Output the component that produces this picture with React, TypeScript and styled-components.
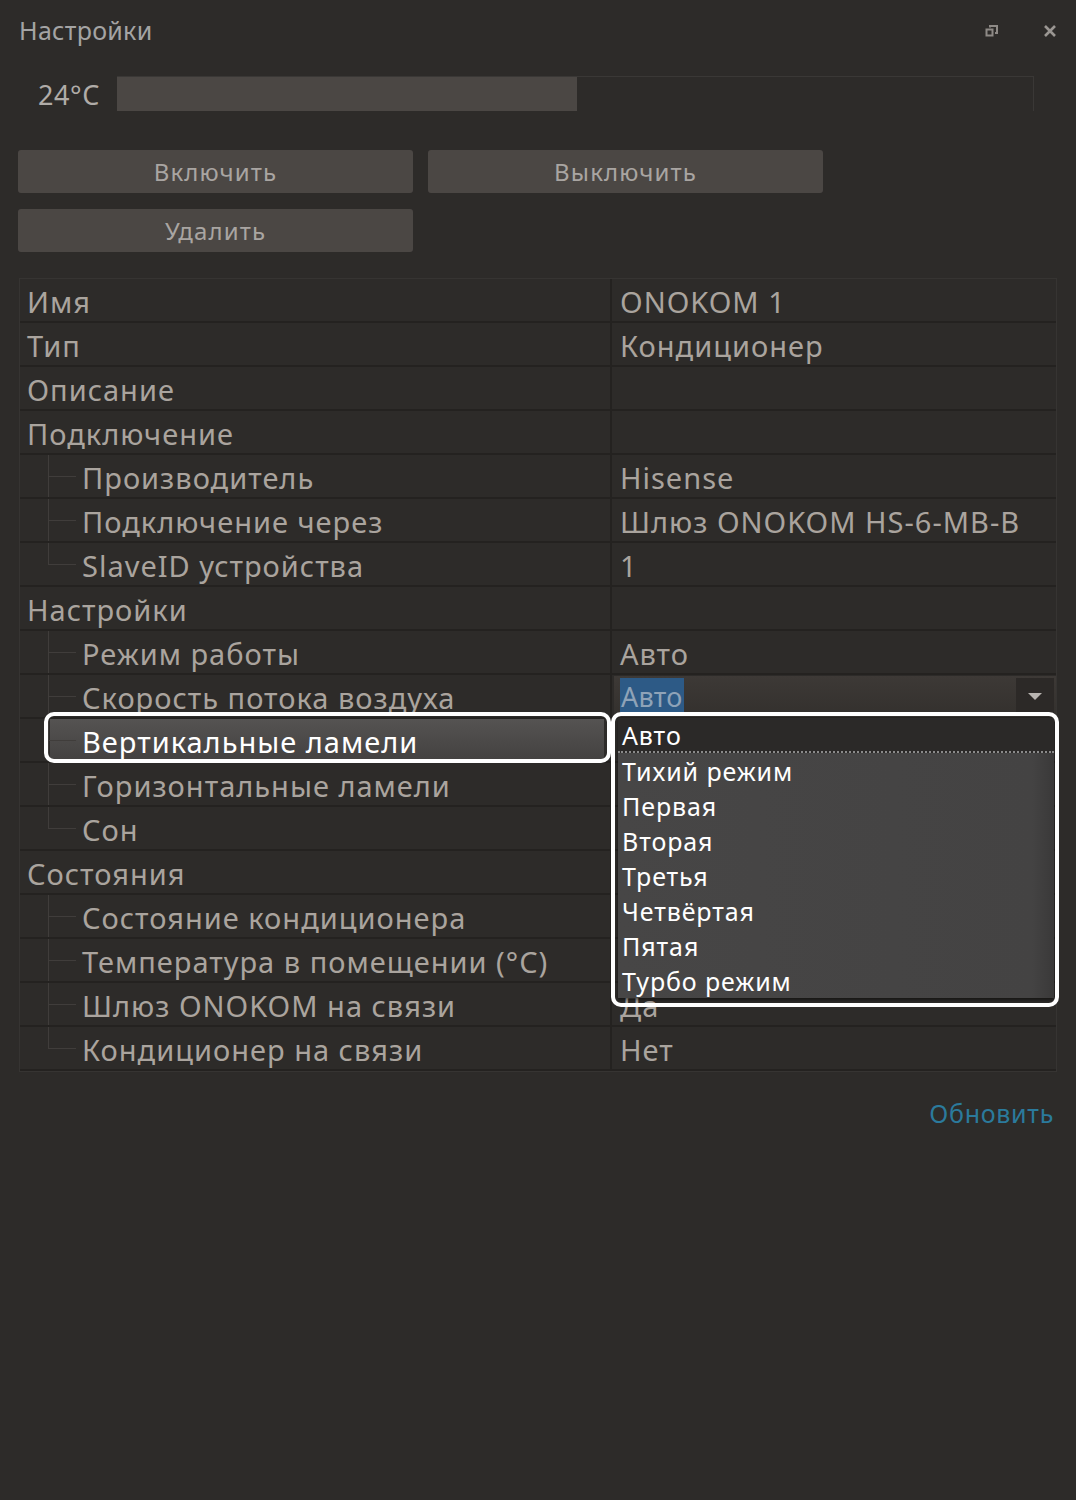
import React from "react";
import styled, { createGlobalStyle, css } from "styled-components";

const FONT = `"Noto Sans", Roboto, sans-serif`;

const Global = createGlobalStyle`
  html, body { margin: 0; padding: 0; background: #2d2b29; }
  body { font-family: ${FONT}; color: #aaa49e; }
  * { box-sizing: border-box; }
`;

const Page = styled.div`
  width: 1076px;
  min-height: 1500px;
  background: #2d2b29;
  padding: 0 19px 0 18px;
  display: flex;
  flex-direction: column;
`;

const Header = styled.div`
  height: 59px;
  display: flex;
  align-items: center;
  justify-content: space-between;
`;

const Title = styled.div`
  font-size: 25px;
  letter-spacing: 0.3px;
  color: #a4a4a4;
  padding-left: 1px;
`;

const WinButtons = styled.div`
  display: flex;
  align-items: center;
  gap: 44px;
  padding-top: 2px;
`;

const TempRow = styled.div`
  display: flex;
  align-items: center;
  height: 36px;
  margin-top: 16px;
  padding-left: 20px;
  padding-right: 23px;
  gap: 16px;
`;

const TempLabel = styled.div`
  font-size: 27px;
  letter-spacing: 0.6px;
  color: #b0aca8;
  width: 63px;
  padding-top: 3px;
`;

const Track = styled.div`
  flex: 1;
  height: 35px;
  border-top: 1px solid #3a3836;
  border-right: 1px solid #3a3836;
  display: flex;
`;

const Fill = styled.div`
  height: 100%;
  background: #4b4744;
`;

const ButtonGrid = styled.div`
  display: grid;
  grid-template-columns: 395px 395px;
  column-gap: 15px;
  row-gap: 16px;
  margin-top: 39px;
`;

const Button = styled.button`
  height: 43px;
  border: none;
  border-radius: 3px;
  background: #4b4744;
  color: #a9a5a2;
  font-family: ${FONT};
  font-size: 24px;
  letter-spacing: 1.1px;
  padding: 0;
`;

const Table = styled.div`
  position: relative;
  margin-top: 26px;
  margin-left: 1px;
  width: 1038px;
  border: 1px solid #363432;
  background: #2d2b29;
`;

const Row = styled.div`
  display: grid;
  grid-template-columns: 592px 1fr;
  height: 44px;
  border-bottom: 2px solid #242220;
  &:last-child { border-bottom: none; }
`;

const LabelCell = styled.div<{ $child?: boolean; $last?: boolean; $selected?: boolean }>`
  position: relative;
  display: flex;
  align-items: center;
  font-size: 29px;
  letter-spacing: 1px;
  color: #aaa49e;
  border-right: 2px solid #242220;
  padding-left: ${(p) => (p.$child ? "62px" : "7px")};
  padding-top: 2px;
  white-space: nowrap;
  ${(p) =>
    p.$child &&
    css`
      &::before {
        content: "";
        position: absolute;
        left: 28px;
        top: 0;
        height: ${p.$last ? "50%" : "100%"};
        border-left: 1px solid #403d3b;
      }
      &::after {
        content: "";
        position: absolute;
        left: 28px;
        top: 50%;
        width: 28px;
        border-top: 1px solid #403d3b;
      }
    `}
  ${(p) =>
    p.$selected &&
    css`
      color: #ffffff;
      background: linear-gradient(#555352, #434140);
      margin: 0 8px 0 30px;
      padding-left: 32px;
      border-right: none;
      &::before { left: -2px; }
      &::after { left: -2px; }
    `}
`;

const ValueCell = styled.div`
  display: flex;
  align-items: center;
  font-size: 29px;
  letter-spacing: 1px;
  color: #aaa49e;
  padding-left: 8px;
  padding-top: 2px;
  white-space: nowrap;
  overflow: hidden;
`;

const Combo = styled.div`
  display: flex;
  align-items: stretch;
  width: 442px;
  height: 42px;
  margin: -1px 0 0 -6px;
  background: linear-gradient(#3d3936, #33302d);
`;

const ComboText = styled.div`
  flex: 1;
  display: flex;
  align-items: center;
  padding-left: 6px;
`;

const Highlight = styled.span`
  background: #2d5a86;
  color: #8fa3b8;
  font-size: 27px;
  letter-spacing: 0.3px;
  line-height: 38px;
  padding: 0 1px;
`;

const ComboArrow = styled.div`
  width: 38px;
  margin: 2px 2px 2px 0;
  background: #2c2927;
  display: flex;
  align-items: center;
  justify-content: center;
`;

const DropList = styled.ul`
  position: absolute;
  left: 598px;
  top: 439px;
  width: 436px;
  margin: 0;
  padding: 0;
  list-style: none;
  background: linear-gradient(90deg, #474646, #444343 95%, #3a3939);
  box-shadow: 0 2px 3px rgba(0, 0, 0, 0.5);
  z-index: 2;
`;

const DropItem = styled.li<{ $active?: boolean }>`
  height: 35px;
  display: flex;
  align-items: center;
  padding-left: 4px;
  font-size: 25px;
  letter-spacing: 0.9px;
  color: #ffffff;
  ${(p) =>
    p.$active &&
    css`
      background: #2b2928;
      border-bottom: 2px dotted #8a8a8a;
    `}
`;

const Callout = styled.div<{ $l: number; $t: number; $w: number; $h: number }>`
  position: absolute;
  left: ${(p) => p.$l}px;
  top: ${(p) => p.$t}px;
  width: ${(p) => p.$w}px;
  height: ${(p) => p.$h}px;
  border: 4px solid #ffffff;
  border-radius: 10px;
  pointer-events: none;
  z-index: 3;
`;

const Footer = styled.div`
  display: flex;
  justify-content: flex-end;
  margin-top: 24px;
  padding-right: 3px;
`;

const Link = styled.a`
  font-size: 25px;
  letter-spacing: 0.7px;
  color: #2b7a9c;
  text-decoration: none;
`;

type RowData = {
  label: string;
  value?: string;
  child?: boolean;
  last?: boolean;
  kind?: "combo" | "selected";
};

const rows: RowData[] = [
  { label: "Имя", value: "ONOKOM 1" },
  { label: "Тип", value: "Кондиционер" },
  { label: "Описание" },
  { label: "Подключение" },
  { label: "Производитель", value: "Hisense", child: true },
  { label: "Подключение через", value: "Шлюз ONOKOM HS-6-MB-B", child: true },
  { label: "SlaveID устройства", value: "1", child: true, last: true },
  { label: "Настройки" },
  { label: "Режим работы", value: "Авто", child: true },
  { label: "Скорость потока воздуха", child: true, kind: "combo" },
  { label: "Вертикальные ламели", child: true, kind: "selected" },
  { label: "Горизонтальные ламели", child: true },
  { label: "Сон", child: true, last: true },
  { label: "Состояния" },
  { label: "Состояние кондиционера", child: true },
  { label: "Температура в помещении (°C)", child: true },
  { label: "Шлюз ONOKOM на связи", value: "Да", child: true },
  { label: "Кондиционер на связи", value: "Нет", child: true, last: true },
];

const options = ["Авто", "Тихий режим", "Первая", "Вторая", "Третья", "Четвёртая", "Пятая", "Турбо режим"];

const RestoreIcon = () => (
  <svg width="14" height="14" viewBox="0 0 14 14">
    <rect x="1.5" y="5.5" width="6" height="6" fill="none" stroke="#8e8a86" strokeWidth="2" />
    <path d="M5 3.5V2h7v7h-2" fill="none" stroke="#8e8a86" strokeWidth="2" />
  </svg>
);

const CloseIcon = () => (
  <svg width="14" height="14" viewBox="0 0 14 14">
    <path d="M2 2L12 12M12 2L2 12" stroke="#9a9692" strokeWidth="2.6" />
  </svg>
);

const ArrowIcon = () => (
  <svg width="14" height="8" viewBox="0 0 14 8">
    <path d="M0 0H14L7 7Z" fill="#b8b4b0" />
  </svg>
);

export default function App() {
  return (
    <>
      <Global />
      <Page>
        <Header>
          <Title>Настройки</Title>
          <WinButtons>
            <RestoreIcon />
            <CloseIcon />
          </WinButtons>
        </Header>
        <TempRow>
          <TempLabel>24°C</TempLabel>
          <Track>
            <Fill style={{ width: "50.2%" }} />
          </Track>
        </TempRow>
        <ButtonGrid>
          <Button>Включить</Button>
          <Button>Выключить</Button>
          <Button>Удалить</Button>
        </ButtonGrid>
        <Table>
          {rows.map((r) => (
            <Row key={r.label}>
              <LabelCell $child={r.child} $last={r.last} $selected={r.kind === "selected"}>
                {r.label}
              </LabelCell>
              <ValueCell>
                {r.kind === "combo" ? (
                  <Combo>
                    <ComboText>
                      <Highlight>Авто</Highlight>
                    </ComboText>
                    <ComboArrow>
                      <ArrowIcon />
                    </ComboArrow>
                  </Combo>
                ) : (
                  r.value
                )}
              </ValueCell>
            </Row>
          ))}
          <DropList>
            {options.map((o, i) => (
              <DropItem key={o} $active={i === 0}>
                {o}
              </DropItem>
            ))}
          </DropList>
          <Callout $l={24} $t={433} $w={567} $h={51} />
          <Callout $l={591} $t={433} $w={448} $h={295} />
        </Table>
        <Footer>
          <Link>Обновить</Link>
        </Footer>
      </Page>
    </>
  );
}
